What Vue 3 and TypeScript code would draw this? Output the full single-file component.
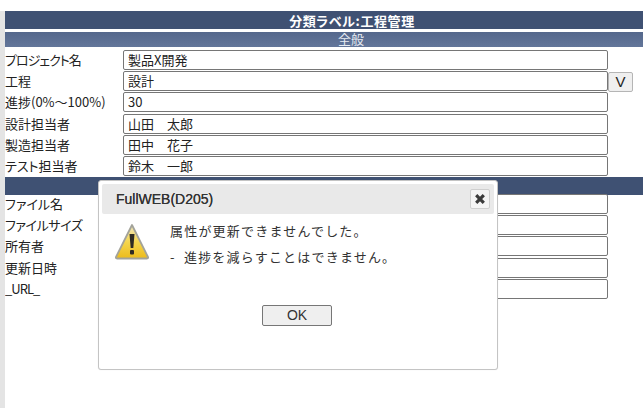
<script setup lang="ts">
const generalRows = [
  { label: 'プロジェクト名', value: '製品X開発', more: false, tone: 'tight' },
  { label: '工程', value: '設計', more: true, tone: '' },
  { label: '進捗(0%～100%)', value: '30', more: false, tone: '' },
  { label: '設計担当者', value: '山田　太郎', more: false, tone: '' },
  { label: '製造担当者', value: '田中　花子', more: false, tone: '' },
  { label: 'テスト担当者', value: '鈴木　一郎', more: false, tone: '' },
]
const fileRows = [
  { label: 'ファイル名', tone: '' },
  { label: 'ファイルサイズ', tone: 'snug' },
  { label: '所有者', tone: '' },
  { label: '更新日時', tone: '' },
  { label: '_URL_', tone: 'tight' },
]
</script>

<template>
  <div class="page">
    <div class="sheet">
      <div class="title-bar">分類ラベル:工程管理</div>
      <div class="sub-bar">全般</div>
      <div class="rows">
        <div v-for="r in generalRows" :key="r.label" class="row">
          <span class="label" :class="r.tone">{{ r.label }}</span>
          <div class="field">{{ r.value }}</div>
          <button v-if="r.more" class="more">V</button>
        </div>
      </div>
      <div class="section-bar"></div>
      <div class="rows">
        <div v-for="l in fileRows" :key="l.label" class="row">
          <span class="label" :class="l.tone">{{ l.label }}</span>
          <div class="field"></div>
        </div>
      </div>
    </div>

    <div class="dialog">
      <div class="dialog-head">
        <span class="dialog-title">FullWEB(D205)</span>
        <button class="close" aria-label="close">
          <svg width="12" height="12" viewBox="0 0 12 12">
            <path d="M2.2 2.2 L9.8 9.8 M9.8 2.2 L2.2 9.8" stroke="#3a3a3a" stroke-width="3.2" fill="none" />
          </svg>
        </button>
      </div>
      <div class="dialog-body">
        <svg class="warn" width="36" height="38" viewBox="0 0 36 38">
          <defs>
            <linearGradient id="warnFill" x1="0" y1="0" x2="0" y2="1">
              <stop offset="0" stop-color="#efe6c0" />
              <stop offset="0.5" stop-color="#f5d650" />
              <stop offset="1" stop-color="#ecbb1a" />
            </linearGradient>
          </defs>
          <path d="M18 2 L34 34 Q34.500 35.500 33 35.500 L3 35.500 Q1.500 35.500 2 34 Z" fill="url(#warnFill)" stroke="#a3a39a" stroke-width="1.800" stroke-linejoin="round" />
          <path d="M15.500 11 L20.500 11 L19.300 25 L16.700 25 Z" fill="#2e2b24" />
          <rect x="16" y="27" width="4" height="4.500" rx="1" fill="#2e2b24" />
        </svg>
        <div class="messages">
          <p>属性が更新できませんでした。</p>
          <p>- &nbsp;進捗を減らすことはできません。</p>
        </div>
      </div>
      <div class="dialog-foot">
        <button class="ok">OK</button>
      </div>
    </div>
  </div>
</template>

<style>
html, body { margin: 0; background: #fff; }
</style>

<style scoped>
.page {
  position: relative;
  width: 643px;
  height: 408px;
  overflow: hidden;
  background: #fff;
  padding-top: 11px;
  box-sizing: border-box;
  font-family: "Noto Sans CJK JP", "Liberation Sans", sans-serif;
  color: #222;
}
.sheet {
  margin-left: 5px;
  height: 397px;
  position: relative;
}
.sheet::before {
  content: "";
  position: absolute;
  left: -5px;
  top: 0;
  bottom: 0;
  width: 5px;
  background: #e4e4e4;
}
.title-bar {
  height: 18px;
  line-height: 19px;
  background: #3f5173;
  color: #fff;
  font-size: 13px;
  font-weight: 700;
  text-align: center;
  letter-spacing: 0.6px;
  font-feature-settings: "palt";
  padding-left: 56px;
}
.sub-bar {
  margin-top: 3px;
  height: 15px;
  line-height: 14px;
  background: linear-gradient(#55688c, #63769a);
  color: #e8ecf2;
  font-size: 13px;
  text-align: center;
  padding-left: 54px;
}
.rows {
  padding-top: 2.4px;
  display: flex;
  flex-direction: column;
}
.section-bar + .rows { padding-top: 0; margin-top: -1px; }
.row {
  display: flex;
  align-items: center;
  height: 21.2px;
  flex: none;
}
.label {
  width: 118px;
  flex: none;
  font-size: 13px;
  line-height: 20px;
  white-space: nowrap;
  font-feature-settings: "palt";
}
.label.tight { letter-spacing: -1px; }
.label.snug { letter-spacing: -0.4px; }
.field {
  width: 485px;
  height: 20px;
  flex: none;
  box-sizing: border-box;
  border: 1px solid #767676;
  border-radius: 2px;
  background: #fff;
  padding-left: 4px;
  font-size: 13px;
  line-height: 17px;
  white-space: pre;
}
.more {
  margin: 1px 0 0 0;
  width: 25px;
  height: 20px;
  padding: 0;
  box-sizing: border-box;
  border: 1px solid #b5b5b5;
  border-radius: 2px;
  background: #efefef;
  color: #222;
  font-family: "Liberation Sans", sans-serif;
  font-size: 15px;
  line-height: 18px;
}
.section-bar {
  height: 18px;
  background: #3f5173;
}
.dialog {
  position: absolute;
  left: 98px;
  top: 180px;
  width: 400px;
  height: 190px;
  box-sizing: border-box;
  background: #fff;
  border: 1px solid #c4c4c4;
  border-radius: 3px;
  padding: 3px;
  display: flex;
  flex-direction: column;
  box-shadow: 0 0 1px rgba(0, 0, 0, 0.15);
}
.dialog-head {
  height: 30px;
  flex: none;
  background: #e9e9e9;
  border-radius: 2px;
  display: flex;
  align-items: center;
  justify-content: space-between;
  padding: 0 4px 0 14px;
}
.dialog-title {
  font-family: "Liberation Sans", sans-serif;
  font-size: 14px;
  font-weight: 400;
  color: #333;
  text-shadow: 0 0 0.6px #333;
}
.close {
  width: 20px;
  height: 20px;
  padding: 0;
  box-sizing: border-box;
  border: 1px solid #cfcfcf;
  border-radius: 2px;
  background: #f4f4f4;
  display: flex;
  align-items: center;
  justify-content: center;
}
.dialog-body {
  display: flex;
  padding: 9px 0 0 12px;
  height: 76px;
  flex: none;
  box-sizing: border-box;
}
.warn {
  flex: none;
}
.messages {
  margin-left: 20px;
  margin-top: -2px;
}
.messages p {
  margin: 0 0 7px;
  font-size: 13px;
  line-height: 19px;
  letter-spacing: 1.2px;
  color: #333;
  white-space: nowrap;
}
.dialog-foot {
  display: flex;
  justify-content: center;
  padding-top: 15px;
  padding-right: 2px;
}
.ok {
  width: 70px;
  height: 21px;
  padding: 0;
  box-sizing: border-box;
  border: 1px solid #767676;
  border-radius: 2px;
  background: #efefef;
  color: #333;
  font-family: "Liberation Sans", sans-serif;
  font-size: 14px;
  line-height: 19px;
}
</style>
